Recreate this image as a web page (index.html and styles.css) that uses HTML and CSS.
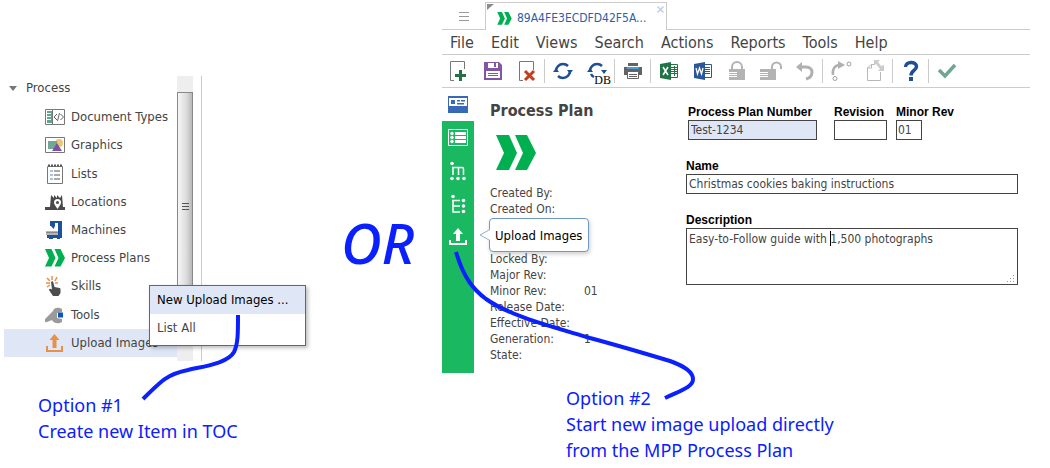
FILE: index.html
```html
<!DOCTYPE html>
<html lang="en">
<head>
<meta charset="utf-8">
<title>Upload Images</title>
<link rel="stylesheet" href="styles.css">
</head>
<body>
<svg class="defs" width="0" height="0" aria-hidden="true">
  <symbol id="chevrons" viewBox="0 0 40 36"><path fill="#00b050" d="M0 0h13l8 18-8 17H0l8-17zM19 0h12l9 18-9 17H19l8-17z"/></symbol>
</svg>
<main class="page">
  <section class="toc">
    <div class="toc-frame">
      <nav class="tree" aria-label="Contents">
        <button class="tree-root"><span class="caret-down"></span>Process</button>
        <ul class="tree-list">
          <li><a class="tree-item" href="#"><svg width="20" height="18" viewBox="0 0 20 18"><path fill="#fff" stroke="#777" d="M.5 1.5h19v15H.5z"/><path fill="#5fa68c" d="M2 3h5v12H2z"/><path stroke="#fff" d="M2 5.500h4M2 8.500h4M2 11.500h4"/><path stroke="#777" d="M7.500 2v14"/><path fill="none" stroke="#666" d="M12 6l-3 3 3 3M15.500 6l3 3-3 3M14.500 5l-2 8"/></svg>Document Types</a></li>
          <li><a class="tree-item" href="#"><svg width="20" height="18" viewBox="0 0 20 18"><path fill="#fff" stroke="#777" d="M.5 1.500h19v15H.5z"/><circle cx="14" cy="7" r="4" fill="#f0c474"/><path fill="#70a894" d="M3 5h9v8H3z"/><path fill="#7e4ea8" d="M12 7l5 8H7z"/></svg>Graphics</a></li>
          <li><a class="tree-item" href="#"><svg width="20" height="20" viewBox="0 0 20 20"><path fill="#fff" stroke="#777" d="M2.500 2.500h15v17h-15z"/><path stroke="#555" stroke-width="2" stroke-dasharray="2 1" d="M3 1.500h14"/><path stroke="#a9c0ea" stroke-width="2" d="M5 7h3M5 11h3M5 15h3"/><path stroke="#555" d="M9 7h6M9 11h6M9 15h6"/></svg>Lists</a></li>
          <li><a class="tree-item" href="#"><svg width="20" height="18" viewBox="0 0 20 18"><path fill="#4a4a4a" d="M0 14h5L6 2l3 3V2l3 3V2l3 3 2-3 1 12h2v3H0z"/><path fill="#fff" d="M12.500 6a3.500 3.500 0 0 1 3.500 3.500c0 2-2 4-3.500 6.500C11 13.500 9 11.500 9 9.500A3.500 3.500 0 0 1 12.500 6z"/><circle cx="12.500" cy="9.500" r="1.500" fill="#4a4a4a"/></svg>Locations</a></li>
          <li><a class="tree-item" href="#"><svg width="20" height="20" viewBox="0 0 20 20"><path fill="#1b519f" d="M5 1h12v17h-2v1h-3v-1H8v1H4v-1H2v-3h11V3H5z"/><path fill="#1b519f" d="M5 2h5v4L8.500 9 6 6H5z"/><path fill="#b4b4b4" d="M1 11h12v4H1z"/><path stroke="#888" d="M1 12.500h12"/></svg>Machines</a></li>
          <li><a class="tree-item" href="#"><svg width="20" height="18"><use href="#chevrons"/></svg>Process Plans</a></li>
          <li><a class="tree-item" href="#"><svg width="20" height="20" viewBox="0 0 20 20"><path fill="none" stroke="#ea8f48" stroke-width="1.500" d="M2 2l3 3M7 0v4M12 1l-2 4M1 7h4M10 7h3M2 11l3-2"/><path fill="#4d4d4d" d="M6 6c1-1 2-1 2.500 1l1 4 5 1c1 0 1 1 1 2v3l-2 3H8l-4-6c0-1 1-2 3-.5z"/></svg>Skills</a></li>
          <li><a class="tree-item" href="#"><svg width="20" height="18" viewBox="0 0 20 18"><path fill="#9a9a9a" d="M17 3c-3-2-8-2-9 2L6 7l-6 6c-1 2 0 4 2 3l5-2c2 4 7 4 10 2v-3l-5-1V7l5-1z"/><path fill="#0c57b5" d="M13 6.500h5v5h-5z"/></svg>Tools</a></li>
          <li class="selected"><a class="tree-item" href="#"><svg width="20" height="20" viewBox="0 0 20 20"><path fill="#ea8f48" d="M9.500 1l5 6h-3v8h-4V7h-3zM1 13h2v4h13v-4h2v6H1z"/></svg>Upload Images</a></li>
        </ul>
      </nav>
      <div class="scrollbar"><div class="thumb"><svg width="7" height="8" viewBox="0 0 7 8"><path stroke="#555" d="M0 .5h7M0 3.500h7M0 6.500h7"/></svg></div></div>
      <div class="menu" role="menu">
        <button class="menu-item active" role="menuitem">New Upload Images ...</button>
        <button class="menu-item" role="menuitem">List All</button>
      </div>
    </div>
    <p class="note note-left">Option #1<br>Create new Item in TOC</p>
  </section>

  <div class="or">OR</div>

  <section class="window">
    <header class="tabs">
      <button class="burger" aria-label="Menu"><svg width="10" height="10" viewBox="0 0 10 10"><path stroke="#999" d="M0 1.500h10M0 5.500h10M0 9.500h10"/></svg></button>
      <a class="tab" href="#"><svg class="fold" width="7" height="6" viewBox="0 0 7 6"><path fill="#8c8c8c" d="M0 0h7L0 6z"/></svg><svg width="15" height="13"><use href="#chevrons"/></svg><span>89A4FE3ECDFD42F5A...</span><svg class="close" width="7" height="7" viewBox="0 0 7 7"><path stroke="#bccfea" stroke-width="1.500" d="M.5.5l6 6M6.500.5l-6 6"/></svg></a>
      <div class="tabs-rest"></div>
    </header>
    <nav class="menubar" aria-label="Main menu"><button>File</button><button>Edit</button><button>Views</button><button>Search</button><button>Actions</button><button>Reports</button><button>Tools</button><button>Help</button></nav>
    <div class="toolbar" role="toolbar">
      <button aria-label="New"><svg width="20" height="22" viewBox="0 0 20 22"><path fill="none" stroke="#777" d="M5 20.500H1.500v-19h14V9"/><path stroke="#217346" stroke-width="3" d="M11.500 10v11M6 15.500h11"/></svg></button>
      <button aria-label="Save"><svg width="20" height="20" viewBox="0 0 20 20"><path fill="#8255a5" d="M1 1h15l3 3v15H1z"/><path fill="#fff" d="M5 2h10v5H5zM3 10h14v7H3z"/><path fill="#8255a5" d="M11 2h2v4h-2z"/><path stroke="#8255a5" d="M5 12.500h10M5 14.500h10"/></svg></button>
      <button aria-label="Delete"><svg width="20" height="22" viewBox="0 0 20 22"><path fill="none" stroke="#777" d="M6 20.500H2.500v-19h14V10"/><path stroke="#c43e1c" stroke-width="3" d="M8 11l9 9M17 11l-9 9"/></svg></button>
      <i class="sep"></i>
      <button aria-label="Refresh"><svg width="20" height="20" viewBox="0 0 20 20"><g fill="none" stroke="#1d4f91" stroke-width="2.500"><path d="M3 10a7 7 0 0 1 7-7q3 0 5 2M17 10a7 7 0 0 1-7 7q-3 0-5-2"/></g><path fill="#1d4f91" d="M0 11h6L3 7zM14 9h6l-3 4z"/></svg></button>
      <button aria-label="Refresh from DB" class="db"><svg width="20" height="20" viewBox="0 0 20 20"><g fill="none" stroke="#1d4f91" stroke-width="2.500"><path d="M3 10a7 7 0 0 1 7-7q3 0 5 2M7 16q-2-1-3-3"/></g><path fill="#1d4f91" d="M0 11h6L3 7zM14 9h6l-3 4z"/></svg><span>DB</span></button>
      <i class="sep"></i>
      <button aria-label="Print"><svg width="18" height="18" viewBox="0 0 18 18"><path fill="#636363" d="M4 1h10v3H4zM0 5h18v8h-3v-3H3v3H0z"/><path fill="#4aa0da" d="M3 5h12v2H3z"/><path fill="#fff" stroke="#636363" d="M3.500 9.500h11v7h-11z"/><path fill="#636363" d="M5 12h8v1H5zM5 14h8v1H5z"/></svg></button>
      <i class="sep"></i>
      <button aria-label="Export to Excel"><svg width="20" height="20" viewBox="0 0 20 20"><path fill="#fff" stroke="#217346" d="M10.500 3.500h8v13h-8z"/><path stroke="#217346" stroke-width="1" d="M12 6.500h6M12 8.500h6M12 10.500h6M12 12.500h6M15.500 5v10"/><path fill="#217346" d="M1 3l11-2v18L1 17z"/><path stroke="#fff" stroke-width="1.500" d="M4 6l5 8M9 6l-5 8"/></svg></button>
      <button aria-label="Export to Word"><svg width="20" height="20" viewBox="0 0 20 20"><path fill="#fff" stroke="#2b579a" d="M10.500 3.500h8v13h-8z"/><path stroke="#2b579a" d="M12 6.500h5M12 8.500h5M12 10.500h5M12 12.500h5"/><path fill="#2b579a" d="M1 3l11-2v18L1 17z"/><path fill="none" stroke="#fff" stroke-width="1.300" d="M3 7l1.500 6 2-6 2 6L10 7"/></svg></button>
      <button aria-label="Lock"><svg width="18" height="20" viewBox="0 0 18 20"><path fill="none" stroke="#b3b3b3" stroke-width="2" d="M4 8V6a4.500 4.500 0 0 1 10 0v2"/><path fill="#b3b3b3" d="M1 8h16v11H1z"/><path stroke="#fff" d="M1 11.500h8M1 13.500h8M1 15.500h8"/></svg></button>
      <button aria-label="Unlock"><svg width="22" height="20" viewBox="0 0 22 20"><path fill="none" stroke="#b3b3b3" stroke-width="2" d="M12 8V6a4 4 0 0 1 9 0v2"/><path fill="#b3b3b3" d="M0 8h16v11H0z"/><path stroke="#fff" d="M0 11.500h8M0 13.500h8M0 15.500h8"/></svg></button>
      <button aria-label="Undo"><svg width="20" height="20" viewBox="0 0 20 20"><path fill="none" stroke="#b0b0b0" stroke-width="3" d="M5 6h6c8 0 8 10 0 12"/><path fill="#b0b0b0" d="M1 6l6-5v10z"/></svg></button>
      <i class="sep"></i>
      <button aria-label="Promote"><svg width="22" height="22" viewBox="0 0 22 22"><path fill="none" stroke="#b0b0b0" stroke-width="2.500" d="M3 15C2 9 5 5 10 5"/><path fill="#b0b0b0" d="M8 1l7 4-7 4z"/><circle cx="19" cy="4" r="2" fill="none" stroke="#a0a0a0"/><circle cx="5" cy="18.500" r="2" fill="none" stroke="#a0a0a0"/></svg></button>
      <button aria-label="Copy"><svg width="18" height="22" viewBox="0 0 18 22"><path fill="none" stroke="#b8b8b8" d="M9 4.500H5L1.500 8v12.500h13V12"/><path fill="none" stroke="#b8b8b8" d="M5.500 4v4H1"/><path fill="#ccc" d="M8 0h6l-2 2 3 4 3-1v6h-6l2-2-4-5-2 1z"/></svg></button>
      <i class="sep"></i>
      <button aria-label="Help"><svg width="16" height="22" viewBox="0 0 16 22"><path fill="none" stroke="#1d4f91" stroke-width="3.500" d="M2.500 7c0-6 11-6 11-.5 0 4-5.500 4-5.500 9"/><path fill="#1d4f91" d="M6 17h4v4H6z"/></svg></button>
      <i class="sep"></i>
      <button aria-label="Done"><svg width="20" height="20" viewBox="0 0 20 20"><path fill="none" stroke="#6fa693" stroke-width="3.500" d="M2 9l6 6L18 4"/></svg></button>
    </div>
    <div class="body">
      <nav class="rail" aria-label="Views">
        <button class="current" aria-label="Form"><svg width="20" height="18" viewBox="0 0 20 18"><path fill="#3769b5" d="M0 0h20v17H0z"/><path fill="#fff" d="M1 2h18v8H1z"/><path fill="#3769b5" d="M3 4h4v4H3zM9 4h3v1.500H9zM13 4h4v1.500h-4zM9 7h7v1.500H9z"/></svg></button>
        <button aria-label="List"><svg width="20" height="18" viewBox="0 0 20 18"><path fill="none" stroke="#fff" d="M.5.5h19v16H.5z"/><path stroke="#fff" stroke-width="3" d="M7 4.500h11M7 8.500h11M7 12.500h11"/><g fill="#fff"><circle cx="4" cy="4.500" r="1.700"/><circle cx="4" cy="8.500" r="1.700"/><circle cx="4" cy="12.500" r="1.700"/></g></svg></button>
        <button aria-label="MBOM"><svg width="16" height="20" viewBox="0 0 16 20"><path fill="none" stroke="#fff" stroke-width="1.500" d="M3 6v8M2 6.500h10q1.500 0 1.500 1.500v6M8.500 7v7"/><g fill="#fff"><circle cx="2" cy="2.500" r="1.800"/><circle cx="2" cy="17.500" r="1.800"/><circle cx="8" cy="17.500" r="1.800"/><circle cx="14" cy="17.500" r="1.800"/></g></svg></button>
        <button aria-label="EBOM"><svg width="16" height="20" viewBox="0 0 16 20"><path fill="none" stroke="#fff" stroke-width="1.500" d="M10 6.500H2M3 6v12h7M3 12h7"/><g fill="#fff"><circle cx="3" cy="2.500" r="1.800"/><circle cx="13.500" cy="6.500" r="1.800"/><circle cx="13.500" cy="12" r="1.800"/><circle cx="13.500" cy="17.500" r="1.800"/></g></svg></button>
        <button aria-label="Upload"><svg width="20" height="20" viewBox="0 0 20 20"><path fill="#fff" d="M10 1l5 6h-3v7H8V7H5zM1 13h2v3h14v-3h2v5H1z"/></svg></button>
        <div class="tooltip" role="tooltip"><svg width="11" height="12" viewBox="0 0 11 12"><path fill="#fff" stroke="#8fb0cf" d="M11 .5L1 6l10 5.500"/></svg>Upload Images</div>
      </nav>
      <aside class="summary">
        <h1>Process Plan</h1>
        <svg class="logo" width="40" height="36"><use href="#chevrons"/></svg>
        <dl><dt>Created By:</dt><dd></dd><dt>Created On:</dt><dd></dd></dl>
        <dl class="later"><dt>Locked By:</dt><dd></dd><dt>Major Rev:</dt><dd></dd><dt>Minor Rev:</dt><dd>01</dd><dt>Release Date:</dt><dd></dd><dt>Effective Date:</dt><dd></dd><dt>Generation:</dt><dd>1</dd><dt>State:</dt><dd></dd></dl>
      </aside>
      <form class="form">
        <div class="row">
          <div class="field number"><label for="num">Process Plan Number</label><input id="num" value="Test-1234"></div>
          <div class="field revision"><label for="rev">Revision</label><input id="rev"></div>
          <div class="field minor"><label for="minor">Minor Rev</label><input id="minor" value="01"></div>
        </div>
        <div class="field"><label for="name">Name</label><input id="name" value="Christmas cookies baking instructions"></div>
        <div class="field"><label for="desc">Description</label><textarea id="desc">Easy-to-Follow guide with 1,500 photographs</textarea><i class="text-caret"></i><svg class="grip" width="8" height="8" viewBox="0 0 8 8"><path stroke="#999" stroke-dasharray="1 2" d="M0 6.500h8M3 3.500h5M6 .5h2"/></svg></div>
      </form>
    </div>
    <p class="note note-right">Option #2<br>Start new image upload directly<br>from the MPP Process Plan</p>
  </section>
  <svg class="arrows" width="1050" height="468" viewBox="0 0 1050 468" aria-hidden="true"><g fill="none" stroke="#0a20ff" stroke-width="4"><path d="M238 315C238 334 238 344 234 352C228 363 205 366 188 370C168 374 162 380 143 399"/><path d="M456 252C464 279 474 290 486 299C510 316 550 326 590 338C620 346 650 355 670 361C684 366 693 372 693 379C693 387 682 390 665 398"/></g></svg>
</main>
</body>
</html>
```
FILE: styles.css
```css
* { box-sizing: border-box; }
body { margin: 0; background: #fff; color: #444; font: 12px/16px "DejaVu Sans Condensed", "Noto Sans", sans-serif; }
button { margin: 0; padding: 0; border: 0; background: none; color: inherit; font: inherit; }
a { color: inherit; text-decoration: none; }
p, h1, dl, dd, ul { margin: 0; padding: 0; }
svg { display: block; flex: none; }
.defs { position: absolute; }
.page { position: relative; display: grid; grid-template-columns: 310px 132px 1fr; padding-right: 20px; }

.toc { padding-top: 76px; }
.toc-frame { position: relative; display: flex; width: 202px; height: 285px; padding-left: 4px; border-right: 1px solid #ccc; font-size: 13px; }
.tree { flex: 1; }
.tree-root { display: flex; align-items: center; gap: 9px; height: 24px; margin-bottom: 3px; padding-left: 5px; }
.caret-down { border: 4px solid transparent; border-top: 5px solid #777; border-bottom: 0; }
.tree-list { display: grid; grid-auto-rows: 1fr; height: 254px; list-style: none; }
.tree-item { display: flex; align-items: center; gap: 6px; height: 100%; padding-left: 41px; white-space: nowrap; }
.selected { background: #dfe7f6; }
.scrollbar { width: 16px; margin-right: 8px; padding-top: 16px; background: #eee; }
.thumb { display: flex; align-items: center; justify-content: center; height: 230px; border: 1px solid #888; background: linear-gradient(90deg, #f6f6f6, #dcdcdc 60%, #b8b8b8); }
.menu { position: absolute; left: 149px; top: 209px; width: 157px; padding-bottom: 3px; border: 1px solid #666; background: #fff; box-shadow: 2px 2px 4px #0004; }
.menu-item { display: block; width: 100%; height: 28px; padding-left: 7px; text-align: left; }
.menu-item.active { background: #dfe7f6; color: #000; }

.note { color: #0a20ff; font: 18px/26px "Noto Sans", sans-serif; white-space: nowrap; }
.note-left { padding: 31px 0 0 38px; }
.note-right { padding: 12px 0 0 124px; }
.or { padding: 206px 0 0 31px; color: #0a20ff; font: italic 500 56px/72px "Noto Sans", sans-serif; }

.tabs { display: flex; height: 30px; padding-top: 2px; }
.burger { display: flex; align-items: center; justify-content: center; width: 43px; border-bottom: 1px solid #ccc; }
.tab { position: relative; display: flex; align-items: center; gap: 5px; width: 182px; padding: 3px 0 0 11px; border: 1px solid #ccc; border-bottom: 0; color: #2b5fa8; }
.fold { position: absolute; left: 1px; top: 1px; }
.close { position: absolute; right: 2px; top: 3px; }
.tabs-rest { flex: 1; border-bottom: 1px solid #ccc; }
.menubar { display: flex; gap: 17px; height: 25px; padding-left: 8px; border-bottom: 1px solid #ccc; font-size: 16px; line-height: 26px; }
.toolbar { display: flex; height: 33px; border-bottom: 1px solid #ccc; }
.toolbar button { display: flex; align-items: center; justify-content: center; width: 34px; position: relative; }
.sep { width: 1px; margin: 4px 1px 4px 0; background: #ccc; }
.db span { position: absolute; right: 3px; bottom: 0; color: #000; font: 12px/14px "Liberation Serif", serif; }

.body { display: flex; }
.rail { position: relative; width: 32px; height: 285px; background: #1bb862; }
.rail button { display: flex; align-items: center; justify-content: center; width: 100%; height: 33px; }
.rail .current { background: #fff; }
.tooltip { position: absolute; left: 47px; top: 130px; width: 100px; height: 34px; padding-left: 5px; border: 1px solid #6d9ac6; border-radius: 4px; background: #fff; color: #000; font-size: 13px; line-height: 34px; white-space: nowrap; box-shadow: 1px 2px 4px #0003; }
.tooltip svg { position: absolute; left: -11px; top: 10px; }
.summary { width: 212px; padding: 13px 0 0 16px; }
h1 { font-size: 16px; line-height: 20px; }
.logo { margin: 14px 0 14px 6px; }
dl { display: grid; grid-template-columns: 94px 1fr; grid-auto-rows: 16px; }
.later { margin-top: 34px; }
.form { flex: 1; display: grid; gap: 18px; align-content: start; padding: 16px 12px 0 0; color: #000; }
.row { display: flex; padding-left: 2px; }
.number { width: 129px; margin-right: 17px; }
.revision { width: 53px; margin-right: 9px; }
.minor { width: 60px; }
.minor input { width: 26px; padding: 0 1px; }
.number input { background: #dfe7f6; }
label { display: block; font: bold 12px/16px "Liberation Sans", sans-serif; white-space: nowrap; }
input, textarea { display: block; width: 100%; margin: 0; padding: 0 2px; border: 1px solid #444; border-radius: 0; background: #fff; color: #444; font: inherit; }
input { height: 20px; }
.form .field { position: relative; }
textarea { height: 57px; padding-top: 2px; resize: none; }
.text-caret { position: absolute; left: 144px; top: 19px; width: 1px; height: 15px; background: #000; }
.grip { position: absolute; right: 3px; bottom: 2px; }
.arrows { position: absolute; left: 0; top: 0; pointer-events: none; }
```
